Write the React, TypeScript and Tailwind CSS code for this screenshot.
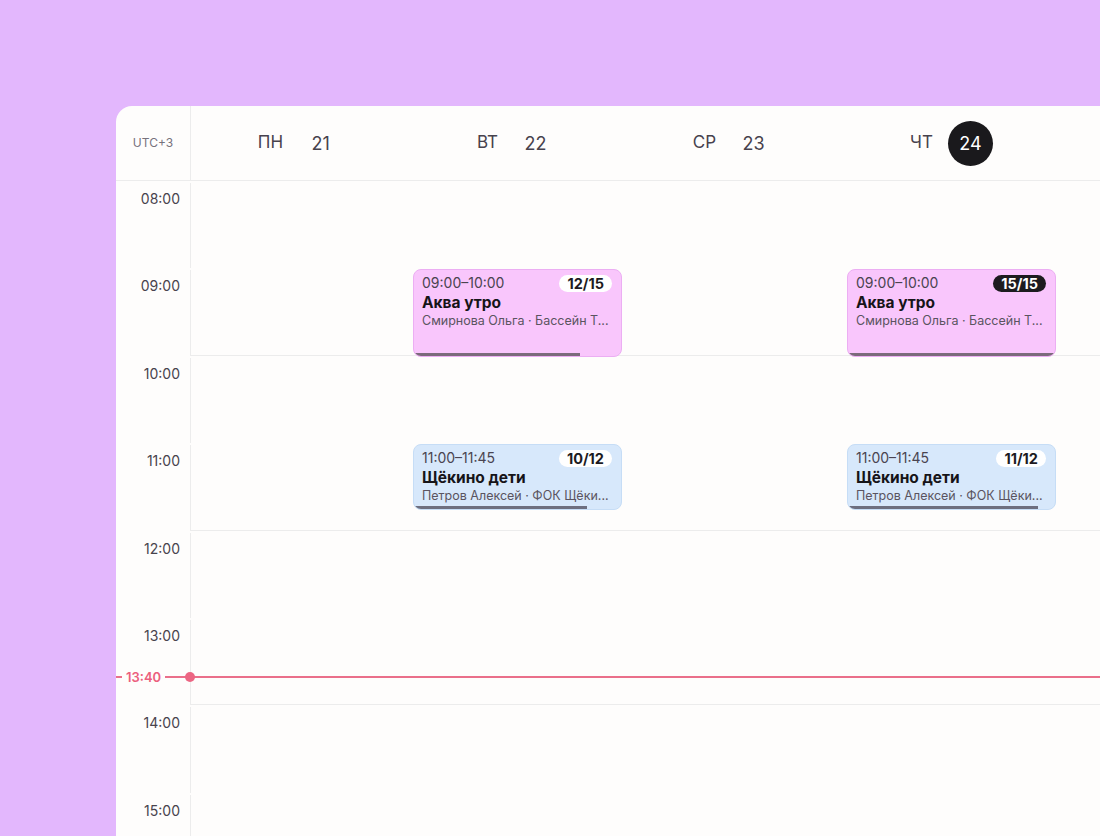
const HOUR = 87.4;
const START = 8;

const days = [
  { name: "ПН", num: 21, today: false },
  { name: "ВТ", num: 22, today: false },
  { name: "СР", num: 23, today: false },
  { name: "ЧТ", num: 24, today: true },
];

const hours = ["08:00", "09:00", "10:00", "11:00", "12:00", "13:00", "14:00", "15:00"];

type Ev = {
  start: number;
  end: number;
  time: string;
  title: string;
  sub: string;
  booked: number;
  total: number;
  kind: "pink" | "blue";
};

const events: Record<number, Ev[]> = {
  1: [
    { start: 9, end: 10, time: "09:00–10:00", title: "Аква утро", sub: "Смирнова Ольга · Бассейн Т...", booked: 12, total: 15, kind: "pink" },
    { start: 11, end: 11.75, time: "11:00–11:45", title: "Щёкино дети", sub: "Петров Алексей · ФОК Щёки...", booked: 10, total: 12, kind: "blue" },
  ],
  3: [
    { start: 9, end: 10, time: "09:00–10:00", title: "Аква утро", sub: "Смирнова Ольга · Бассейн Т...", booked: 15, total: 15, kind: "pink" },
    { start: 11, end: 11.75, time: "11:00–11:45", title: "Щёкино дети", sub: "Петров Алексей · ФОК Щёки...", booked: 11, total: 12, kind: "blue" },
  ],
};

function EventCard({ ev }: { ev: Ev }) {
  const full = ev.booked === ev.total;
  const pink = ev.kind === "pink";
  return (
    <div
      className={`absolute left-[5px] right-[3px] overflow-hidden rounded-[8px] border pl-[8px] pr-[9px] pt-[4px] ${
        pink ? "border-[#ecaef3] bg-[#f9c6fc]" : "border-[#c6ddf6] bg-[#d7e8fb]"
      }`}
      style={{ top: (ev.start - START) * HOUR + 1, height: (ev.end - ev.start) * HOUR }}
    >
      <div className="flex items-center justify-between">
        <span className="text-[14px] leading-[18px] text-[#4a4450]">{ev.time}</span>
        <span
          className={`rounded-full px-[8px] text-[14.5px] font-bold leading-[17px] ${
            full ? "bg-[#1d1b1f] text-white" : "bg-white text-[#1d1b1f]"
          }`}
        >
          {ev.booked}/{ev.total}
        </span>
      </div>
      <div className="mt-[1px] text-[15.5px] font-bold leading-[19px] text-[#161418]">{ev.title}</div>
      <div className="whitespace-nowrap text-[12.5px] leading-[18px] text-[#5a5460]">{ev.sub}</div>
      <div
        className={`absolute bottom-0 left-0 h-[3px] ${pink ? "bg-[#7b6a7b]" : "bg-[#6d6f80]"}`}
        style={{ width: `${(ev.booked / ev.total) * 100}%` }}
      />
    </div>
  );
}

export default function App() {
  const nowTop = (13 + 40 / 60 - START) * HOUR;
  return (
    <div
      className="h-[836px] overflow-hidden bg-[#e3b7fd] pl-[116px] pt-[106px]"
      style={{ fontFamily: "Inter, 'Noto Sans', sans-serif" }}
    >
      <div className="h-full overflow-hidden rounded-tl-[16px] bg-[#fefdfc]">
        {/* header */}
        <div className="flex h-[75px] border-b border-[#ececec]">
          <div className="flex w-[75px] shrink-0 items-center justify-center border-r border-[#ececec] text-[12px] text-[#77727c]">
            UTC+3
          </div>
          {days.map((d) => (
            <div key={d.name} className="flex w-[217px] shrink-0 items-center justify-center gap-[15px] pl-[2px]">
              <span className="text-[17px] text-[#47424d]">{d.name}</span>
              <span
                className={`flex h-[45px] w-[45px] items-center justify-center rounded-full text-[18px] ${
                  d.today ? "bg-[#1a191c] text-white" : "text-[#47424d]"
                }`}
              >
                {d.num}
              </span>
            </div>
          ))}
        </div>

        {/* body */}
        <div className="relative flex">
          <div className="w-[75px] shrink-0">
            {hours.map((h) => (
              <div key={h} className="pt-[2px]" style={{ height: HOUR }}>
                <div className="h-full border-r border-[#ececec] pr-[10px] pt-[6px] text-right text-[14px] leading-[20px] text-[#48434d]">
                  {h}
                </div>
              </div>
            ))}
          </div>

          <div className="relative flex-1">
            {hours.map((h, i) => (
              <div
                key={h}
                className={i % 2 === 1 ? "border-b border-[#ececec]" : ""}
                style={{ height: HOUR }}
              />
            ))}
            <div className="absolute inset-0 flex">
              {days.map((d, i) => (
                <div key={d.name} className="relative w-[217px] shrink-0">
                  {(events[i] || []).map((ev) => (
                    <EventCard key={ev.time} ev={ev} />
                  ))}
                </div>
              ))}
            </div>
          </div>

          {/* current time */}
          <div className="absolute left-0 right-0" style={{ top: nowTop - 7 }}>
            <div className="relative flex h-[16px] w-full items-center">
              <div className="absolute left-0 right-0 top-[7px] h-[2px] bg-[#ea6f8a]" />
              <span className="relative ml-[6px] bg-[#fefdfc] px-[4px] text-[13px] font-semibold leading-[16px] text-[#ec5f7e]">
                13:40
              </span>
              <span className="absolute left-[69px] top-[3px] h-[10px] w-[10px] rounded-full bg-[#ec6683]" />
            </div>
          </div>
        </div>
      </div>
    </div>
  );
}
